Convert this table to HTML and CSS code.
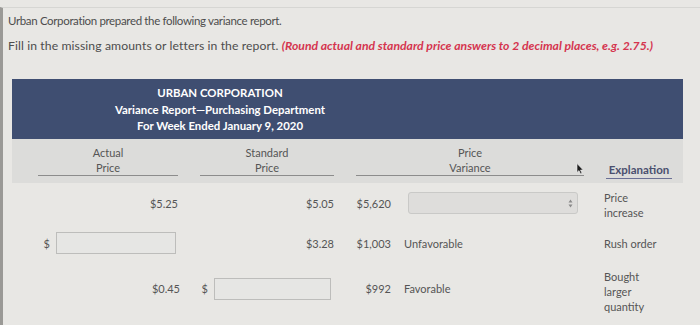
FILE: index.html
```html
<!DOCTYPE html>
<html lang="en">
<head>
    <meta charset="UTF-8">
    <title>Variance Report</title>
    <link rel="stylesheet" href="styles.css">
</head>
<body>
<div class="page">
    <p class="intro">Urban Corporation prepared the following variance report.</p>
    <p class="task">Fill in the missing amounts or letters in the report. <em>(Round actual and standard price answers to 2 decimal places, e.g. 2.75.)</em></p>

    <div class="report">
        <div class="report-head">
            <div class="title">
                URBAN CORPORATION<br>
                Variance Report&mdash;Purchasing Department<br>
                For Week Ended January 9, 2020
            </div>
        </div>

        <div class="cols">
            <div class="col-label">Actual<br>Price</div>
            <div class="col-label">Standard<br>Price</div>
            <div class="col-label variance-label">
                Price<br>Variance
                <svg class="pointer" width="8" height="12" viewBox="0 0 8 12">
                    <path d="M1 0.5 L1 9.5 L3 7.6 L4.6 11 L6 10.3 L4.5 7 L7.2 7 Z" fill="#1c1c1c" stroke="#f2f2f2" stroke-width="0.6"/>
                </svg>
            </div>
            <div class="col-label explain-label">Explanation</div>
        </div>

        <div class="row row-1">
            <div class="cell num">$5.25</div>
            <div class="cell num">$5.05</div>
            <div class="cell variance">
                <span class="amount">$5,620</span>
                <div class="select">
                    <svg width="5" height="9" viewBox="0 0 5 9">
                        <path d="M2.5 0.5 L4.5 3.5 L0.5 3.5 Z M2.5 8.5 L4.5 5.5 L0.5 5.5 Z" fill="#8a8a8a"/>
                    </svg>
                </div>
            </div>
            <div class="cell note">Price<br>increase</div>
        </div>

        <div class="row row-2">
            <div class="cell num"><span class="dollar">$</span><span class="box box-actual"></span></div>
            <div class="cell num">$3.28</div>
            <div class="cell variance">
                <span class="amount">$1,003</span>
                <span class="result">Unfavorable</span>
            </div>
            <div class="cell note">Rush order</div>
        </div>

        <div class="row row-3">
            <div class="cell num late">$0.45</div>
            <div class="cell num"><span class="dollar">$</span><span class="box box-std"></span></div>
            <div class="cell variance">
                <span class="amount">$992</span>
                <span class="result">Favorable</span>
            </div>
            <div class="cell note">Bought<br>larger<br>quantity</div>
        </div>
    </div>
</div>
</body>
</html>
```

FILE: styles.css
```css
*{
    margin: 0;
    padding: 0;
    box-sizing: border-box;
}
body{
    background: #e8e7e4;
    font-family: Lato, "Open Sans", sans-serif;
    color: #4d4d4d;
    font-size: 11px;
}
.page{
    margin-top: 7px;
    height: 318px;
    border-top: 1px solid #d6d6d3;
    border-left: 3px solid #9a9996;
    padding-left: 5px;
}
.intro{
    margin-top: 6px;
    line-height: 14px;
    font-size: 11.5px;
    letter-spacing: -0.35px;
}
.task{
    margin-top: 10px;
    line-height: 15px;
    font-size: 12.2px;
    letter-spacing: 0.1px;
}
.task em{
    color: #d5354f;
    font-weight: 700;
    letter-spacing: 0;
}
.report{
    margin: 26px 0 0 4px;
    width: 671px;
}
.report-head{
    background: #3f4e71;
    height: 60px;
    padding-top: 6px;
}
.report-head .title{
    width: 416px;
    text-align: center;
    color: #fff;
    font-weight: 700;
    font-size: 11.4px;
    line-height: 16.5px;
}

/* column layout shared by the label band and the rows */
.cols, .row{
    display: grid;
    grid-template-columns: 140px 134px 228px 66px;
    column-gap: 22px;
    padding-left: 26px;
}
.cols{
    background: #dcdcda;
    height: 44px;
}
.col-label{
    height: 37px;
    padding-top: 6px;
    text-align: center;
    line-height: 15px;
    font-size: 11px;
    color: #555;
    border-bottom: 1px solid #8c8c8c;
}
.variance-label{
    position: relative;
}
.pointer{
    position: absolute;
    right: 0;
    top: 24px;
}
.explain-label{
    height: 40px;
    padding-top: 23px;
    color: #4a4f6e;
    font-weight: 700;
    font-size: 11.5px;
    border-bottom-color: #6b7095;
}

.row{
    align-items: center;
    height: 40px;
    color: #555;
}
.row-3{
    height: 50px;
}
.num{
    display: flex;
    justify-content: flex-end;
    align-items: center;
}
.late{
    margin-right: -2px;
}
.dollar{
    margin-right: 6px;
}
.box{
    display: block;
    height: 22px;
    border: 1px solid #bdbdbb;
    background: #e6e6e4;
}
.box-actual{
    width: 120px;
    margin-right: 2px;
}
.box-std{
    width: 117px;
    margin-right: 3px;
}
.variance{
    display: flex;
    align-items: center;
}
.amount{
    width: 35px;
    text-align: right;
    margin-right: 13px;
}
.select{
    width: 170px;
    height: 22px;
    margin-left: 4px;
    border: 1px solid #c9c9c7;
    border-radius: 3px;
    background: #dedddb;
    display: flex;
    justify-content: flex-end;
    align-items: center;
    padding-right: 4px;
}
.note{
    line-height: 15px;
    margin-left: -2px;
}
.row-1 .note{
    padding-top: 4px;
}
.row-3 .note{
    padding-top: 6px;
}
```
